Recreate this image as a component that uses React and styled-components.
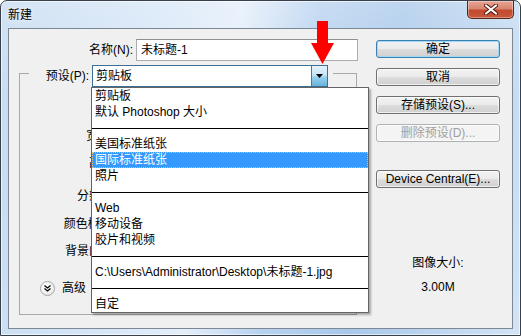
import React from 'react';
import styled, { createGlobalStyle } from 'styled-components';

const GlobalStyle = createGlobalStyle`
  html, body {
    margin: 0;
    padding: 0;
    width: 521px;
    height: 336px;
    overflow: hidden;
    background: #ffffff;
  }
  body {
    font-family: "Liberation Sans", "Noto Sans CJK SC", sans-serif;
    font-size: 12px;
    color: #000;
  }
`;

const Window = styled.div`
  position: relative;
  width: 521px;
  height: 336px;
  box-sizing: border-box;
  border: 1px solid #38404c;
  border-radius: 7px 7px 0 0;
  padding: 0 7px 6px 7px;
  display: flex;
  flex-direction: column;
  background:
    linear-gradient(180deg, rgba(255,255,255,0.25) 0%, rgba(255,255,255,0) 30%),
    linear-gradient(100deg, #c6dbf1 0%, #d4e5f7 25%, #e4eefa 42%, #b7d2ef 55%, #a9c8ea 70%, #bcd5ef 85%, #d3e4f6 100%);
  box-shadow: inset 0 0 0 1px rgba(255,255,255,0.6);
`;

const TitleBar = styled.div`
  height: 27px;
  display: flex;
  justify-content: space-between;
  align-items: flex-start;
`;

const Title = styled.span`
  margin-top: 6px;
  line-height: 16px;
  text-shadow: 0 0 6px rgba(255,255,255,0.9);
`;

const CloseButton = styled.div`
  width: 47px;
  height: 18px;
  margin-right: -1px;
  box-sizing: border-box;
  border: 1px solid #5a2418;
  border-top: none;
  border-radius: 0 0 5px 5px;
  background: linear-gradient(180deg, #e8a593 0%, #d88670 45%, #c24a2f 55%, #c8583c 100%);
  box-shadow: inset 0 0 0 1px rgba(255,255,255,0.35);
  display: flex;
  align-items: center;
  justify-content: center;
`;

const Client = styled.div`
  flex: 1;
  display: flex;
  background: #f0f0f0;
  border: 1px solid #7d8894;
`;

const LeftPane = styled.div`
  width: 359px;
  display: flex;
  flex-direction: column;
`;

const NameRow = styled.div`
  margin-top: 10px;
  display: flex;
  align-items: center;
  gap: 3px;
`;

const Label = styled.span`
  width: ${p => p.$w}px;
  text-align: right;
  line-height: 16px;
  white-space: nowrap;
  color: ${p => (p.$disabled ? '#8d8d8d' : '#000')};
`;

const TextInput = styled.div`
  width: ${p => p.$w}px;
  height: 22px;
  box-sizing: border-box;
  border: 1px solid #abadb3;
  border-top-color: #8e8f8f;
  background: #fff;
  padding: 0 4px;
  display: flex;
  align-items: center;
  line-height: 16px;
`;

const GroupBox = styled.div`
  margin: 12px 0 0 10px;
  width: 338px;
  height: 242px;
  box-sizing: border-box;
  border: 1px solid #a9a9a9;
  display: flex;
  flex-direction: column;
`;

const GroupHeader = styled.div`
  margin: -9px 0 0 9px;
  padding-right: 5px;
  width: fit-content;
  background: #f0f0f0;
  display: flex;
  align-items: center;
  gap: 3px;
`;

const Combo = styled.div`
  position: relative;
  width: ${p => p.$w}px;
  height: 22px;
  box-sizing: border-box;
  border: 1px solid #3c6e96;
  background: #fff;
  display: flex;
  align-items: center;
`;

const ComboText = styled.span`
  flex: 1;
  padding-left: 3px;
  line-height: 16px;
`;

const ComboArrow = styled.div`
  width: 16px;
  height: 20px;
  box-sizing: border-box;
  border-left: 1px solid #3c7fb1;
  background: linear-gradient(180deg, #e5f4fc 0%, #c4e5f6 45%, #98d1ef 55%, #68b3db 100%);
  display: flex;
  align-items: center;
  justify-content: center;
`;

const DropList = styled.div`
  position: absolute;
  left: -2px;
  top: 21px;
  width: 278px;
  box-sizing: border-box;
  border: 1px solid #646464;
  background: #fff;
  box-shadow: 2px 2px 2px rgba(0,0,0,0.3);
  z-index: 10;
`;

const DropItem = styled.div`
  height: 16px;
  box-sizing: border-box;
  padding-left: 3px;
  line-height: 16px;
  white-space: nowrap;
  background: ${p => (p.$selected ? '#3399ff' : 'transparent')};
  color: ${p => (p.$selected ? '#fff' : '#000')};
  outline: ${p => (p.$selected ? '1px dotted #f0c060' : 'none')};
  outline-offset: -1px;
`;

const DropSeparator = styled.div`
  height: 16px;
  display: flex;
  align-items: center;
  &::after {
    content: '';
    flex: 1;
    height: 1px;
    background: #000;
  }
`;

const FieldRow = styled.div`
  margin-top: ${p => p.$space}px;
  display: flex;
  align-items: center;
  gap: 3px;
  height: 22px;
`;

const AdvancedRow = styled.div`
  margin-top: auto;
  margin-bottom: 18px;
  padding-left: 20px;
  display: flex;
  align-items: center;
  gap: 7px;
  line-height: 16px;
`;

const RoundToggle = styled.div`
  width: 15px;
  height: 15px;
  box-sizing: border-box;
  border-radius: 50%;
  border: 1px solid #a6a6a6;
  background: radial-gradient(circle at 40% 35%, #ffffff 0%, #f2f2f2 55%, #d9d9d9 100%);
  display: flex;
  align-items: center;
  justify-content: center;
`;

const RightPane = styled.div`
  flex: 1;
  padding: 11px 12px 0 8px;
  display: flex;
  flex-direction: column;
  align-items: stretch;
`;

const Button = styled.div`
  height: 18px;
  margin-top: ${p => p.$space}px;
  box-sizing: border-box;
  border: 1px solid ${p => (p.$default ? '#3c7fb1' : p.$disabled ? '#adb2b5' : '#707070')};
  border-radius: 3px;
  background: ${p => (p.$disabled
    ? '#f4f4f4'
    : 'linear-gradient(180deg, #f2f2f2 0%, #ebebeb 48%, #dddddd 52%, #cfcfcf 100%)')};
  box-shadow: ${p => (p.$default ? 'inset 0 0 0 1px #9fd9f6' : 'inset 0 0 0 1px rgba(255,255,255,0.7)')};
  color: ${p => (p.$disabled ? '#a0a0a0' : '#000')};
  display: flex;
  align-items: center;
  justify-content: center;
  line-height: 16px;
  white-space: nowrap;
`;

const SizeInfo = styled.div`
  margin-top: 67px;
  display: flex;
  flex-direction: column;
  align-items: center;
  gap: 8px;
  line-height: 16px;
`;

const RedArrow = styled.svg`
  position: absolute;
  left: 310px;
  top: 20px;
  z-index: 20;
`;

const presets = [
  { t: '剪贴板' },
  { t: '默认 Photoshop 大小' },
  { sep: true },
  { t: '美国标准纸张' },
  { t: '国际标准纸张', selected: true },
  { t: '照片' },
  { sep: true },
  { t: 'Web' },
  { t: '移动设备' },
  { t: '胶片和视频' },
  { sep: true },
  { t: 'C:\\Users\\Administrator\\Desktop\\未标题-1.jpg' },
  { sep: true },
  { t: '自定' },
];

const fields = [
  { label: '大小(I):', space: 7, disabled: true },
  { label: '宽度(W):', space: 9 },
  { label: '高度(H):', space: 5 },
  { label: '分辨率(R):', space: 11 },
  { label: '颜色模式(M):', space: 6 },
  { label: '背景内容(C):', space: 5 },
];

export default function App() {
  return (
    <>
      <GlobalStyle />
      <Window>
        <TitleBar>
          <Title>新建</Title>
          <CloseButton>
            <svg width="14" height="11" viewBox="0 0 14 11">
              <path d="M2 1.5 L12 9.5 M12 1.5 L2 9.5" stroke="#4a1a10" strokeWidth="4" strokeLinecap="round" />
              <path d="M2 1.5 L12 9.5 M12 1.5 L2 9.5" stroke="#ffffff" strokeWidth="2.2" strokeLinecap="round" />
            </svg>
          </CloseButton>
        </TitleBar>

        <Client>
          <LeftPane>
            <NameRow>
              <Label $w={124}>名称(N):</Label>
              <TextInput $w={222}>未标题-1</TextInput>
            </NameRow>

            <GroupBox>
              <GroupHeader>
                <Label $w={60}>预设(P):</Label>
                <Combo $w={236}>
                  <ComboText>剪贴板</ComboText>
                  <ComboArrow>
                    <svg width="7" height="4" viewBox="0 0 7 4">
                      <path d="M0 0 H7 L3.5 4 Z" fill="#000" />
                    </svg>
                  </ComboArrow>
                  <DropList>
                    {presets.map((p, i) =>
                      p.sep ? (
                        <DropSeparator key={i} />
                      ) : (
                        <DropItem key={i} $selected={p.selected}>{p.t}</DropItem>
                      )
                    )}
                  </DropList>
                </Combo>
              </GroupHeader>

              {fields.map(f => (
                <FieldRow key={f.label} $space={f.space}>
                  <Label $w={113} $disabled={f.disabled}>{f.label}</Label>
                  <TextInput $w={80} />
                </FieldRow>
              ))}

              <AdvancedRow>
                <RoundToggle>
                  <svg width="7" height="7" viewBox="0 0 7 7">
                    <path d="M0.5 0.5 L3.5 3 L6.5 0.5 M0.5 3.5 L3.5 6 L6.5 3.5" stroke="#000" strokeWidth="1.3" fill="none" />
                  </svg>
                </RoundToggle>
                <span>高级</span>
              </AdvancedRow>
            </GroupBox>
          </LeftPane>

          <RightPane>
            <Button $default $space={0}>确定</Button>
            <Button $space={10}>取消</Button>
            <Button $space={10}>存储预设(S)...</Button>
            <Button $disabled $space={10}>删除预设(D)...</Button>
            <Button $space={28}>Device Central(E)...</Button>
            <SizeInfo>
              <span>图像大小:</span>
              <span>3.00M</span>
            </SizeInfo>
          </RightPane>
        </Client>

        <RedArrow width="24" height="44" viewBox="0 0 24 44">
          <rect x="6" y="0" width="11" height="23" fill="#ff0000" />
          <path d="M0 22 H23 L11.5 43 Z" fill="#ff0000" />
        </RedArrow>
      </Window>
    </>
  );
}
